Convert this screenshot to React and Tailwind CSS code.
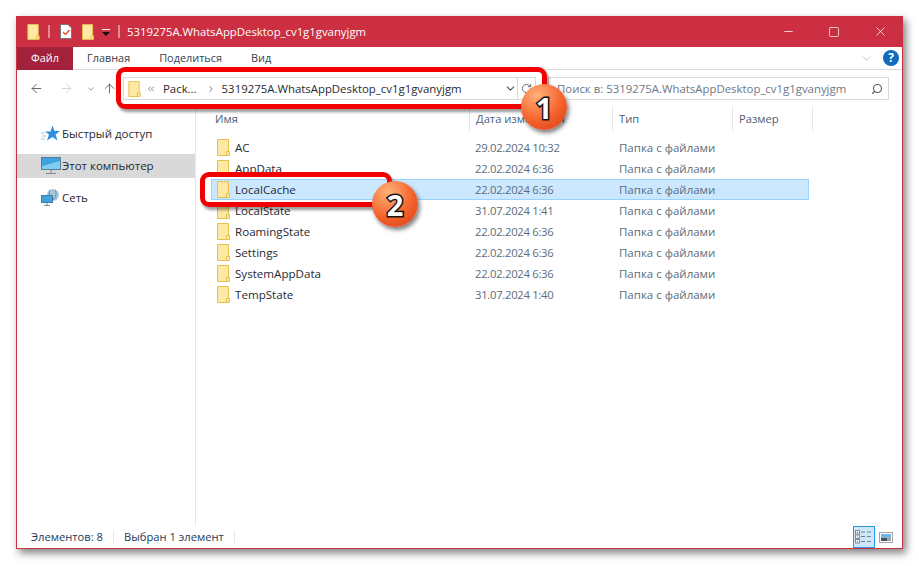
import React from 'react';
import { ArrowLeft, ArrowRight, ArrowUp, ChevronDown, ChevronRight, ChevronsLeft, RotateCw, Search, Minus, X, Square } from 'lucide-react';

const rows = [
  { name: 'AC', date: '29.02.2024 10:32' },
  { name: 'AppData', date: '22.02.2024 6:36' },
  { name: 'LocalCache', date: '22.02.2024 6:36', selected: true },
  { name: 'LocalState', date: '31.07.2024 1:41' },
  { name: 'RoamingState', date: '22.02.2024 6:36' },
  { name: 'Settings', date: '22.02.2024 6:36' },
  { name: 'SystemAppData', date: '22.02.2024 6:36' },
  { name: 'TempState', date: '31.07.2024 1:40' },
];

function Folder({ w = 13, h = 17 }) {
  return (
    <svg width={w} height={h} viewBox="0 0 13 17" className="shrink-0">
      <path d="M0.5 0.5H11.5V12.5H12.5V16.5H0.5Z" fill="#fde9a4" stroke="#e8c04e" />
      <path d="M9.5 16V12.5H12.5" fill="none" stroke="#e8c04e" />
    </svg>
  );
}

function StarIcon() {
  return (
    <svg width="20" height="18" viewBox="0 0 20 18">
      <path d="M11.5 0.5L13.5 6H19L14.5 9.5L16.5 15.5L11.5 12L6 15.5L8 9.5L4 6.5H9.5Z" fill="#2f8fdc" />
      <path d="M0 8H4M1 11H5M0 14H4" stroke="#9fcbea" strokeWidth="1" />
    </svg>
  );
}

function MonitorIcon() {
  return (
    <svg width="20" height="18" viewBox="0 0 20 18">
      <rect x="0.5" y="0.5" width="19" height="12" fill="#3ea3dd" stroke="#5a7e96" />
      <path d="M1 9L19 4V12H1Z" fill="#7fcdf0" />
      <path d="M10 13V16M5 16.5H15" stroke="#7b8b96" />
    </svg>
  );
}

function NetworkIcon() {
  return (
    <svg width="20" height="18" viewBox="0 0 20 18">
      <circle cx="12" cy="6" r="6" fill="#a9c6dc" />
      <path d="M9 1C7 5 9 8 13 10M14 1C16 4 15 8 12 11" stroke="#5f93bb" fill="none" />
      <rect x="0.5" y="6.5" width="11" height="7" fill="#3ea3dd" stroke="#3f7da8" />
      <path d="M6 14V16M3 16.5H9" stroke="#7b8b96" />
    </svg>
  );
}

function DetailsIcon() {
  return (
    <svg width="18" height="14" viewBox="0 0 18 14">
      <rect x="0.5" y="0.5" width="4" height="3.5" fill="#fff" stroke="#8a8a8a" />
      <rect x="0.5" y="5" width="4" height="3.5" fill="#fff" stroke="#8a8a8a" />
      <rect x="0.5" y="9.5" width="4" height="3.5" fill="#fff" stroke="#8a8a8a" />
      <rect x="2" y="2" width="1" height="1" fill="#555" />
      <rect x="2" y="6.5" width="1" height="1" fill="#2a8fd8" />
      <rect x="2" y="11" width="1" height="1" fill="#d8502a" />
      <path d="M6 2H10M12 2H16M6 6.5H10M12 6.5H16M6 11.5H10M12 11.5H16" stroke="#7d7d7d" strokeWidth="1" />
    </svg>
  );
}

function PreviewIcon() {
  return (
    <svg width="14" height="11" viewBox="0 0 14 11" className="ml-[4px] shrink-0">
      <rect x="0.5" y="0.5" width="13" height="10" fill="#fff" stroke="#a3a3a3" />
      <rect x="2" y="2" width="10" height="3" fill="#6cb4ea" />
      <rect x="2" y="5" width="10" height="4" fill="#9aa7b0" />
      <rect x="2" y="6" width="6" height="3" fill="#46525c" />
    </svg>
  );
}

function NavItem({ icon, label, active }) {
  return (
    <div className={`flex h-[24px] items-center gap-[1px] pl-[24px] ${active ? 'bg-[#d9d9d9]' : ''}`}>
      <span className="flex w-[20px] justify-center">{icon}</span>
      <span className="text-[11.5px] text-[#1f2a33]">{label}</span>
    </div>
  );
}

function HeaderCell({ label, className }) {
  return (
    <div className={`flex h-[24px] items-center border-r border-[#e5e5e5] pl-[6px] text-[11.2px] text-[#4c607a] ${className}`}>
      {label}
    </div>
  );
}

function Badge({ n, className }) {
  return (
    <div className={`absolute flex h-[46px] w-[46px] items-center justify-center rounded-full bg-[radial-gradient(circle_at_35%_25%,#ffb27a,#f4622a_55%,#d83a1c)] shadow-[2px_3px_4px_rgba(0,0,0,0.5)] ${className}`}>
      <span className="text-[29px] font-bold leading-none text-white [-webkit-text-stroke:3px_#111] [paint-order:stroke_fill]">{n}</span>
    </div>
  );
}

export default function App() {
  return (
    <div className="relative h-[566px] w-[919px] overflow-hidden bg-white p-[16px] pb-[16px] font-['Open_Sans','Noto_Sans',sans-serif]">
      <div className="flex h-[533px] flex-col border border-t-0 border-[#cb2f41] bg-white shadow-[3px_4px_8px_rgba(0,0,0,0.5)]">
        {/* title bar */}
        <div className="-mx-px flex h-[31px] shrink-0 items-center bg-[#cb2f41] pl-[11px] text-white">
          <Folder w={13} h={16} />
          <div className="ml-[8px] h-[13px] w-[2px] border-x border-[#e08d97]" />
          <svg width="12" height="15" viewBox="0 0 12 15" className="ml-[10px]">
            <path d="M0.5 0.5H8L11.5 4V14.5H0.5Z" fill="#fff" stroke="#777" />
            <path d="M3 8L5.5 10.5L9.5 6" stroke="#e4572e" strokeWidth="1.5" fill="none" />
          </svg>
          <div className="ml-[10px]"><Folder w={12} h={16} /></div>
          <svg width="8" height="8" viewBox="0 0 8 8" className="ml-[8px] mt-[2px]">
            <path d="M0 0.5H8" stroke="#fff" />
            <path d="M0 3H8L4 7Z" fill="#111" />
          </svg>
          <div className="ml-[8px] h-[13px] w-[2px] border-x border-[#e08d97]" />
          <span className="ml-[7px] text-[11.35px]">5319275A.WhatsAppDesktop_cv1g1gvanyjgm</span>
          <div className="ml-auto flex h-full items-center">
            <div className="flex w-[46px] justify-center"><Minus size={13} strokeWidth={1.4} /></div>
            <div className="flex w-[46px] justify-center"><Square size={12} strokeWidth={1.4} /></div>
            <div className="flex w-[46px] justify-center"><X size={15} strokeWidth={1.2} /></div>
          </div>
        </div>

        {/* ribbon tabs */}
        <div className="flex h-[23px] shrink-0 items-center border-b border-[#dadbdc] text-[10.9px] text-[#37424e]">
          <div className="flex h-[23px] w-[56px] items-center justify-center bg-[#a3213a] text-white">Файл</div>
          <span className="ml-[14px]">Главная</span>
          <span className="ml-[29px]">Поделиться</span>
          <span className="ml-[29px]">Вид</span>
          <ChevronDown size={13} strokeWidth={1} className="ml-auto text-[#8b8b8b]" />
          <div className="ml-[10px] mr-[3px] flex h-[16px] w-[16px] items-center justify-center rounded-full bg-[#0f6cbd] text-[12px] font-bold text-white">?</div>
        </div>

        {/* address bar */}
        <div className="flex h-[37px] shrink-0 items-center text-[11.4px]">
          <ArrowLeft size={15} strokeWidth={1.6} className="ml-[12px] text-[#6b6b6b]" />
          <ArrowRight size={15} strokeWidth={1.6} className="ml-[15px] text-[#d4d4d4]" />
          <ChevronDown size={10} strokeWidth={2} className="ml-[12px] text-[#8a8a8a]" />
          <ArrowUp size={15} strokeWidth={1.6} className="ml-[6px] text-[#6b6b6b]" />
          <div className="ml-[6px] flex h-[23px] w-[413px] shrink-0 items-center border border-[#d9d9d9] pl-[4px]">
            <Folder w={13} h={16} />
            <ChevronsLeft size={10} className="ml-[5px] text-[#777]" />
            <span className="ml-[7px] text-[#1f2a33]">Pack...</span>
            <ChevronRight size={10} strokeWidth={2.2} className="ml-[9px] text-[#777]" />
            <span className="ml-[6px] text-[#1f2a33]">5319275A.WhatsAppDesktop_cv1g1gvanyjgm</span>
            <ChevronDown size={13} strokeWidth={2} className="ml-auto text-[#555]" />
            <div className="flex h-full w-[18px] items-center justify-center border-l border-[#d9d9d9]">
              <RotateCw size={11} strokeWidth={2} className="text-[#666]" />
            </div>
          </div>
          <div className="ml-[12px] flex h-[23px] w-[341px] shrink-0 items-center border border-[#d9d9d9] pl-[8px] pr-[5px] text-[#6d7785]">
            <span>Поиск в: 5319275A.WhatsAppDesktop_cv1g1gvanyjgm</span>
            <Search size={12} strokeWidth={2.2} className="ml-auto -scale-x-100 text-[#555]" />
          </div>
        </div>

        {/* body */}
        <div className="flex min-h-0 flex-1">
          <div className="flex w-[179px] shrink-0 flex-col gap-[8px] border-r border-[#e8e8e8] pt-[15px]">
            <NavItem icon={<StarIcon />} label="Быстрый доступ" />
            <NavItem icon={<MonitorIcon />} label="Этот компьютер" active />
            <NavItem icon={<NetworkIcon />} label="Сеть" />
          </div>
          <div className="min-w-0 flex-1 pl-[15px]">
            <div className="flex h-[24px]">
              <HeaderCell label="Имя" className="w-[259px] !pl-[4px]" />
              <HeaderCell label="Дата изменения" className="w-[143px]" />
              <HeaderCell label="Тип" className="w-[120px]" />
              <HeaderCell label="Размер" className="w-[80px]" />
            </div>
            <div className="mt-[6px] w-[598px]">
              {rows.map((row) => (
                <div
                  key={row.name}
                  className={`flex h-[21px] items-center border ${row.selected ? 'border-[#99d1ff] bg-[#cce8ff]' : 'border-transparent'}`}
                >
                  <div className="flex w-[263px] items-center gap-[5px] pl-[5px] text-[11.6px] text-[#1f2a33]">
                    <Folder />
                    <span>{row.name}</span>
                  </div>
                  <span className="w-[144px] pt-[1px] text-[11.3px] tracking-[-0.3px] text-[#5d6b7b]">{row.date}</span>
                  <span className="text-[11.5px] text-[#5d6b7b]">Папка с файлами</span>
                </div>
              ))}
            </div>
          </div>
        </div>

        {/* status bar */}
        <div className="flex h-[22px] shrink-0 items-center pl-[14px] pr-[9px] text-[11.2px] text-[#1e3a5c]">
          <span>Элементов: 8</span>
          <div className="ml-[10px] h-[12px] border-l border-[#e5e5e5]" />
          <span className="ml-[10px]">Выбран 1 элемент</span>
          <div className="ml-[10px] h-[12px] border-l border-[#e5e5e5]" />
          <div className="ml-auto flex h-[22px] w-[22px] items-center justify-center border border-[#2a9be0] bg-[#cce8ff]">
            <DetailsIcon />
          </div>
          <PreviewIcon />
        </div>
      </div>

      {/* red callouts over the window */}
      <div className="absolute left-[116px] top-[67px] h-[42px] w-[431px] rounded-[9px] border-[5px] border-[#f00000] shadow-[2px_3px_3px_rgba(0,0,0,0.4)]" />
      <div className="absolute left-[200px] top-[172px] h-[35px] w-[192px] rounded-[9px] border-[5px] border-[#f00000] shadow-[2px_3px_3px_rgba(0,0,0,0.4)]" />
      <Badge n="1" className="left-[521px] top-[84px]" />
      <Badge n="2" className="left-[372px] top-[181px]" />
    </div>
  );
}
